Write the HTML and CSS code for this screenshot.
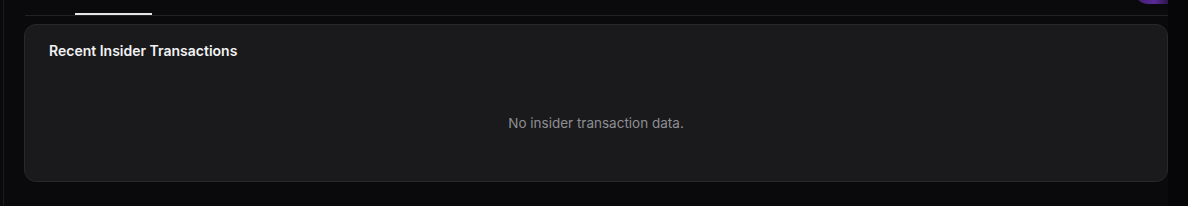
FILE: index.html
```
<!DOCTYPE html>
<html lang="en">
<head>
    <meta charset="UTF-8">
    <meta name="viewport" content="width=device-width, initial-scale=1.0">
    <title>Insider Transactions</title>
    <link rel="stylesheet" href="styles.css">
</head>
<body>
    <div class="layout">
        <aside class="sidebar"></aside>

        <main class="main">
            <div class="tabs">
                <div class="tab"></div>
                <div class="tab active"></div>
                <div class="tabs-spacer"></div>
                <button class="pill"></button>
            </div>

            <section class="card">
                <h2 class="card-title">Recent Insider Transactions</h2>
                <div class="empty">No insider transaction data.</div>
            </section>
        </main>

        <div class="gutter"></div>
    </div>
</body>
</html>
```

FILE: styles.css
```
:root {
    --page-bg: #0a0a0c;
    --gutter-bg: #060608;
    --card-bg: #1a1a1c;
    --card-border: #28282b;
    --line: #222225;
    --text: #f2f2f4;
    --muted: #8e8e93;
}

* {
    box-sizing: border-box;
}

body {
    margin: 0;
    background: var(--gutter-bg);
    font-family: Inter, 'Noto Sans', sans-serif;
    color: var(--text);
}

.layout {
    display: flex;
    min-height: 206px;
}

.sidebar {
    width: 4px;
    border-right: 1px solid #1c1c1f;
    background: var(--page-bg);
}

.main {
    width: 1164px;
    background: var(--page-bg);
    padding: 0 0 0 20px;
}

.gutter {
    flex: 1;
}

/* tab bar, labels are scrolled out of view */
.tabs {
    display: flex;
    height: 16px;
    border-bottom: 1px solid var(--line);
    margin-left: 1px;
}

.tab {
    width: 50px;
    height: 15px;
}

.tab.active {
    width: 77px;
    border-bottom: 2px solid #e6e6e8;
}

.tabs-spacer {
    flex: 1;
}

.pill {
    width: 34px;
    height: 28px;
    margin-top: -24px;
    border: none;
    border-radius: 0 0 0 14px;
    background: linear-gradient(90deg, #3a1a66, #5b2a98 60%, #2a1548);
}

.card {
    margin: 8px 0 0 0;
    width: 1144px;
    background: var(--card-bg);
    border: 1px solid var(--card-border);
    border-radius: 12px;
    padding: 18px 24px 0;
}

.card-title {
    margin: 0;
    font-size: 14px;
    line-height: 16px;
    font-weight: 600;
    color: var(--text);
}

.empty {
    padding: 56px 0 50px;
    text-align: center;
    font-size: 13.5px;
    line-height: 16px;
    color: var(--muted);
}
```
